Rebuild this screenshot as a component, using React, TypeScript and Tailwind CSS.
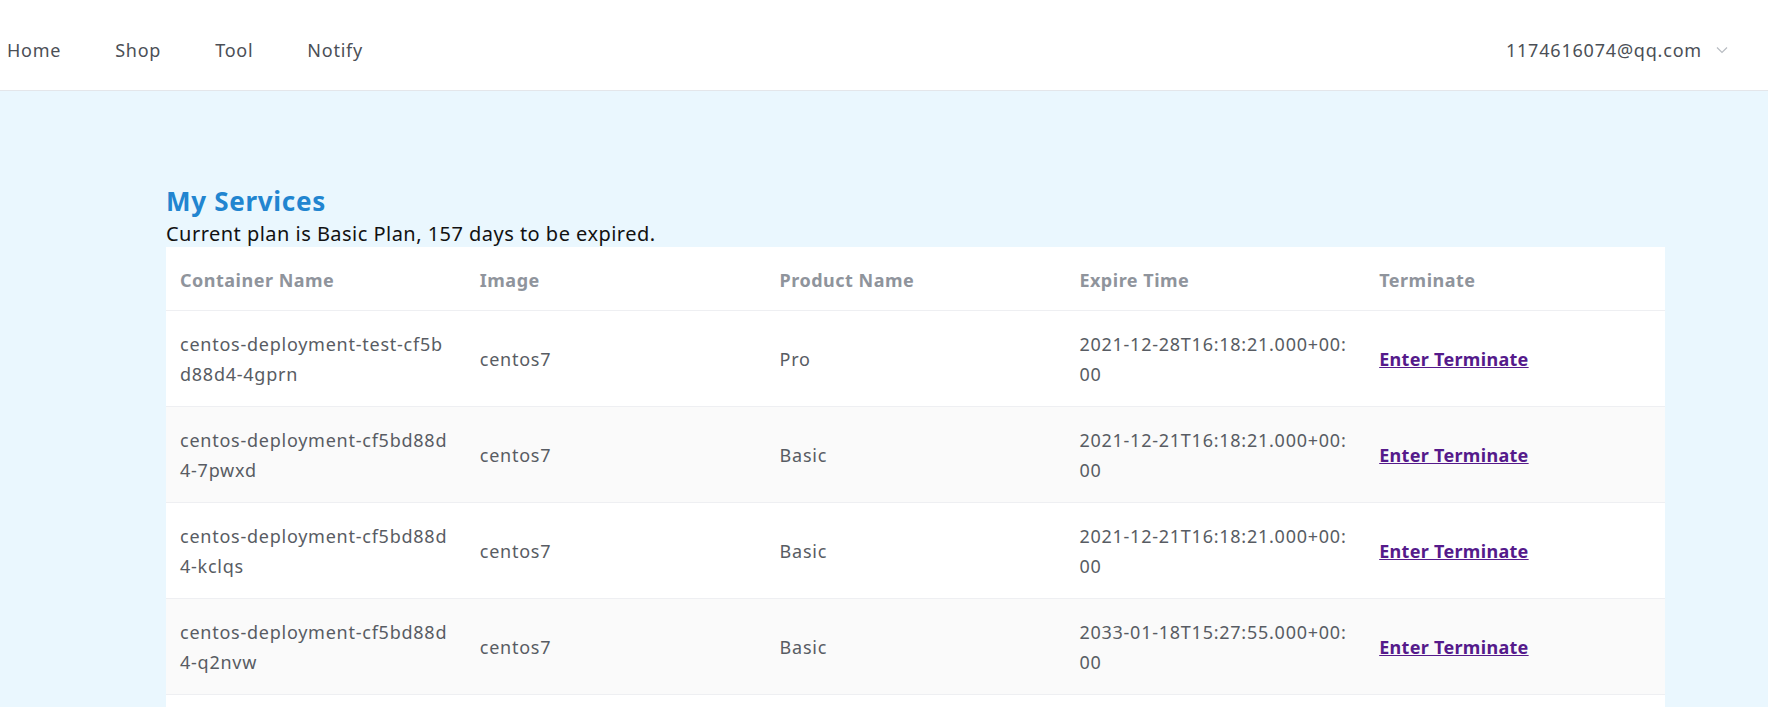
import React from "react";

interface Service {
  name: string;
  image: string;
  product: string;
  expire: string;
}

const services: Service[] = [
  {
    name: "centos-deployment-test-cf5bd88d4-4gprn",
    image: "centos7",
    product: "Pro",
    expire: "2021-12-28T16:18:21.000+00:00",
  },
  {
    name: "centos-deployment-cf5bd88d4-7pwxd",
    image: "centos7",
    product: "Basic",
    expire: "2021-12-21T16:18:21.000+00:00",
  },
  {
    name: "centos-deployment-cf5bd88d4-kclqs",
    image: "centos7",
    product: "Basic",
    expire: "2021-12-21T16:18:21.000+00:00",
  },
  {
    name: "centos-deployment-cf5bd88d4-q2nvw",
    image: "centos7",
    product: "Basic",
    expire: "2033-01-18T15:27:55.000+00:00",
  },
];

const font = { fontFamily: '"Noto Sans", "Open Sans", sans-serif' };

const Header = () => (
  <header className="h-[91px] bg-white border-b border-[#e4e6ea] flex items-center justify-between pt-[10px] text-[18px] tracking-[0.75px] text-[#4b4f56]">
    <nav className="flex items-center gap-[54px] pl-[7px]">
      <a className="cursor-pointer">Home</a>
      <a className="cursor-pointer">Shop</a>
      <a className="cursor-pointer">Tool</a>
      <a className="cursor-pointer">Notify</a>
    </nav>
    <div className="flex items-center gap-[14px] pr-[40px]">
      <span className="tracking-[0.8px]">1174616074@qq.com</span>
      <svg width="12" height="8" viewBox="0 0 12 8" fill="none">
        <path d="M1 1.5 6 6.5 11 1.5" stroke="#b8bcc2" strokeWidth="1.2" />
      </svg>
    </div>
  </header>
);

const Row = ({ item, striped }: { item: Service; striped: boolean }) => (
  <div
    className={`${
      striped ? "bg-[#fafafa] " : "bg-white "
    }grid grid-cols-5 h-[96px] border-b border-[#eeeff2] items-center text-[18px] leading-[30px] tracking-[0.75px] text-[#585c63]`}
  >
    <div className="px-[14px] break-all">{item.name}</div>
    <div className="px-[14px]">{item.image}</div>
    <div className="px-[14px]">{item.product}</div>
    <div className="px-[14px] break-all">{item.expire}</div>
    <div className="px-[14px]">
      <a className="font-bold underline tracking-[0.3px] text-[#551a8b] cursor-pointer">
        Enter Terminate
      </a>
    </div>
  </div>
);

export default function App() {
  return (
    <div className="min-h-screen bg-[#eaf7fe]" style={font}>
      <Header />
      <main className="pt-[93px] pl-[166px] pr-[103px]">
        <h2 className="text-[26px] font-bold leading-[35px] tracking-[0.7px] text-[#2185d0]">
          My Services
        </h2>
        <p className="mt-[1px] text-[20px] leading-[27px] tracking-[0.47px] text-[#111]">
          Current plan is Basic Plan, 157 days to be expired.
        </p>
        <div className="bg-white pb-[24px]">
          <div className="grid grid-cols-5 h-[64px] pt-[3px] items-center border-b border-[#eeeff2] text-[18px] font-bold tracking-[0.5px] text-[#8f949c]">
            <div className="px-[14px]">Container Name</div>
            <div className="px-[14px]">Image</div>
            <div className="px-[14px]">Product Name</div>
            <div className="px-[14px]">Expire Time</div>
            <div className="px-[14px]">Terminate</div>
          </div>
          {services.map((item, i) => (
            <Row key={item.name} item={item} striped={i % 2 === 1} />
          ))}
        </div>
      </main>
    </div>
  );
}
